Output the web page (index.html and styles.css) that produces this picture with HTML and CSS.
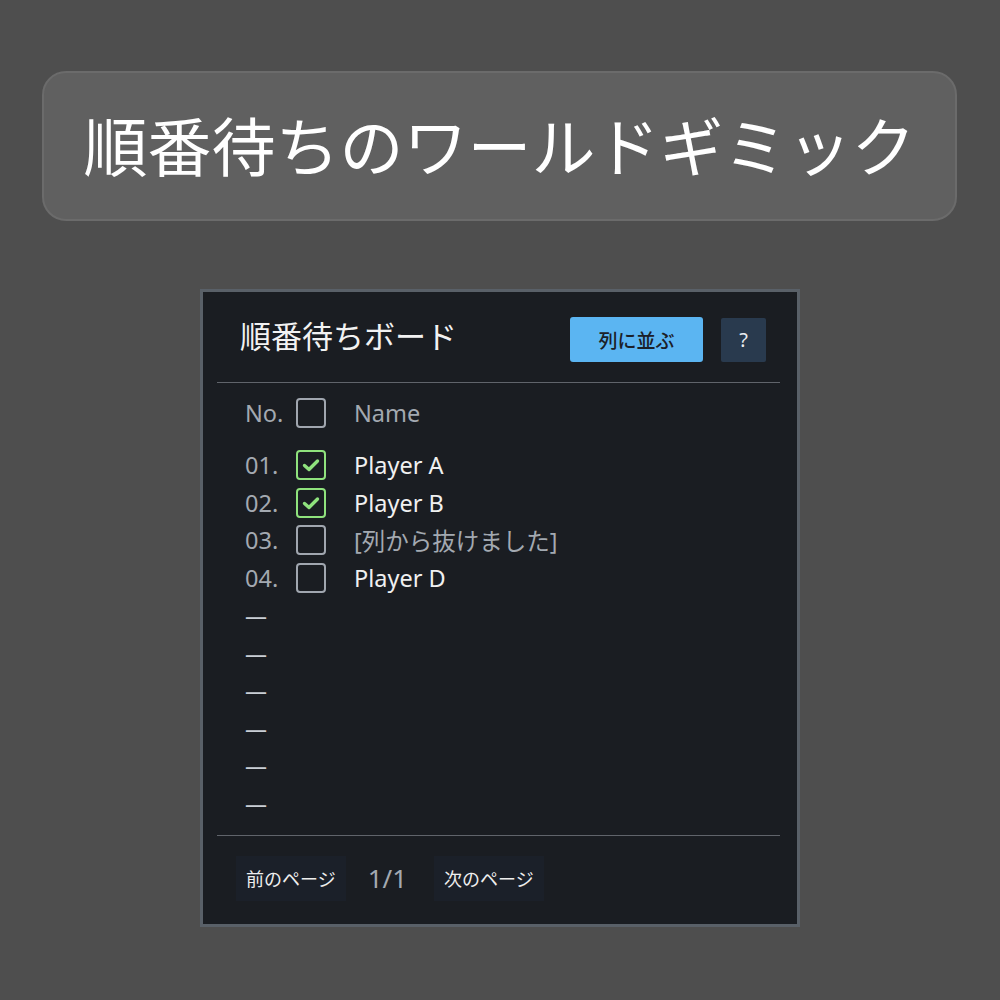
FILE: index.html
```html
<!DOCTYPE html>
<html lang="ja">
<head>
    <meta charset="UTF-8">
    <meta name="viewport" content="width=device-width, initial-scale=1.0">
    <title>順番待ちのワールドギミック</title>
    <link rel="stylesheet" href="styles.css">
</head>
<body>
<div class="banner">順番待ちのワールドギミック</div>

<div class="board">
    <div class="board-head">
        <div class="board-title">順番待ちボード</div>
        <button class="join-btn">列に並ぶ</button>
        <button class="help-btn">?</button>
    </div>

    <div class="board-list">
        <div class="row row-head">
            <span class="num">No.</span>
            <span class="check"></span>
            <span class="name">Name</span>
        </div>

        <div class="items">
            <div class="row">
                <span class="num">01.</span>
                <span class="check checked">
                    <svg viewBox="0 0 24 24"><path d="M5.5 12.5l4.5 4 8.5-8.5"/></svg>
                </span>
                <span class="name">Player A</span>
            </div>
            <div class="row">
                <span class="num">02.</span>
                <span class="check checked">
                    <svg viewBox="0 0 24 24"><path d="M5.5 12.5l4.5 4 8.5-8.5"/></svg>
                </span>
                <span class="name">Player B</span>
            </div>
            <div class="row">
                <span class="num">03.</span>
                <span class="check"></span>
                <span class="name left">[列から抜けました]</span>
            </div>
            <div class="row">
                <span class="num">04.</span>
                <span class="check"></span>
                <span class="name">Player D</span>
            </div>
            <div class="row"><span class="dash">—</span></div>
            <div class="row"><span class="dash">—</span></div>
            <div class="row"><span class="dash">—</span></div>
            <div class="row"><span class="dash">—</span></div>
            <div class="row"><span class="dash">—</span></div>
            <div class="row"><span class="dash">—</span></div>
        </div>
    </div>

    <div class="board-foot">
        <button class="page-btn">前のページ</button>
        <span class="page-num">1/1</span>
        <button class="page-btn">次のページ</button>
    </div>
</div>
</body>
</html>
```

FILE: styles.css
```css
body {
    margin: 0;
    background-color: #4e4e4e;
    font-family: "Noto Sans", "Noto Sans CJK JP", sans-serif;
    height: 1000px;
}

.banner {
    box-sizing: border-box;
    width: 915px;
    height: 150px;
    margin: 71px 0 0 42px;
    padding-bottom: 6px;
    display: flex;
    align-items: center;
    justify-content: center;
    background-color: #606060;
    border: 2px solid #6b6b6b;
    border-radius: 24px;
    color: #ffffff;
    font-family: "Noto Sans CJK JP", sans-serif;
    font-size: 64px;
    font-weight: 400;
}

.board {
    box-sizing: border-box;
    width: 600px;
    height: 638px;
    margin: 68px 0 0 200px;
    background-color: #1a1d22;
    border: 3px solid #596068;
    display: flex;
    flex-direction: column;
}

.board-head {
    height: 90px;
    margin: 0 17px 0 14px;
    padding: 0 14px 0 23px;
    display: flex;
    align-items: center;
    border-bottom: 1px solid #60646b;
}

.board-title {
    flex: 1;
    color: #f2f2f2;
    font-size: 31px;
    margin-top: -6px;
}

button {
    font-family: "Noto Sans CJK JP", sans-serif;
    border: none;
    cursor: pointer;
}

.join-btn {
    width: 133px;
    height: 45px;
    margin: 5px 18px 0 0;
    background-color: #5bb5f2;
    border-radius: 3px;
    color: #1b2028;
    font-size: 19px;
    font-weight: 500;
}

.help-btn {
    width: 45px;
    height: 44px;
    margin-top: 5px;
    background-color: #293a4e;
    border-radius: 2px;
    color: #e8ecf0;
    font-family: "Noto Sans", sans-serif;
    font-size: 20px;
}

.board-list {
    flex: 1;
    margin: 0 17px 0 14px;
    padding: 11px 0 0 28px;
    border-bottom: 1px solid #60646b;
}

.items {
    margin-top: 15px;
}

.row {
    height: 37.5px;
    display: flex;
    align-items: center;
    font-size: 23.5px;
}

.num {
    width: 51px;
    color: #a3a9b1;
}

.check {
    box-sizing: border-box;
    width: 30px;
    height: 30px;
    border: 2.5px solid #a0a6af;
    border-radius: 4px;
    display: flex;
    align-items: center;
    justify-content: center;
}

.check.checked {
    border-color: #8fe27d;
}

.check svg {
    width: 24px;
    height: 24px;
    fill: none;
    stroke: #8fe27d;
    stroke-width: 3.4;
    stroke-linecap: round;
    stroke-linejoin: round;
}

.name {
    margin-left: 28px;
    color: #f0f0f0;
}

.row-head .name,
.name.left {
    color: #a3a9b1;
}

.dash {
    color: #c9ced5;
    font-size: 22px;
}

.board-foot {
    height: 88px;
    padding: 0 0 4px 33px;
    box-sizing: border-box;
    display: flex;
    align-items: center;
}

.page-btn {
    height: 45px;
    padding: 0 10px;
    background-color: #1b2029;
    color: #eeeeee;
    font-size: 18px;
}

.page-num {
    margin: 0 27px 0 22px;
    color: #a3a9b1;
    font-size: 26px;
}
```
